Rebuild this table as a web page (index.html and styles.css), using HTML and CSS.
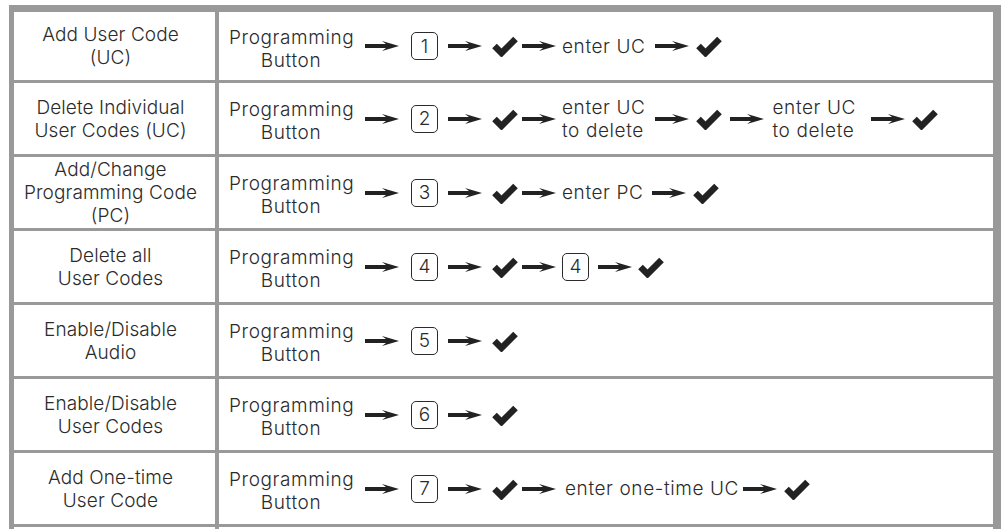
FILE: index.html
```html
<!DOCTYPE html>
<html>
<head>
<meta charset="utf-8">
<link rel="stylesheet" href="styles.css">
</head>
<body>
<svg width="0" height="0" class="defs">
  <defs>
    <symbol id="arr" viewBox="0 0 34 10"><path d="M0 3 H21 L17 0 L34 5 L17 10 L21 7 H0 Z"/></symbol>
    <symbol id="chk" viewBox="0 0 26 22"><path d="M2.5 11 L9.5 18 L23.5 4" fill="none" stroke="currentColor" stroke-width="6.5"/></symbol>
  </defs>
</svg>
<div class="table">
  <div class="row first">
    <div class="name">Add User Code<br>(UC)</div>
    <div class="steps">
      <div class="pb">Programming<br>Button</div>
      <svg class="arrow m12"><use href="#arr"/></svg>
      <div class="box m12">1</div>
      <svg class="arrow m10"><use href="#arr"/></svg>
      <svg class="check m10"><use href="#chk"/></svg>
      <svg class="arrow m4"><use href="#arr"/></svg>
      <div class="txt m6">enter UC</div>
      <svg class="arrow m9"><use href="#arr"/></svg>
      <svg class="check m7"><use href="#chk"/></svg>
    </div>
  </div>
  <div class="row">
    <div class="name">Delete Individual<br>User Codes (UC)</div>
    <div class="steps">
      <div class="pb">Programming<br>Button</div>
      <svg class="arrow m12"><use href="#arr"/></svg>
      <div class="box m12">2</div>
      <svg class="arrow m10"><use href="#arr"/></svg>
      <svg class="check m10"><use href="#chk"/></svg>
      <svg class="arrow m4"><use href="#arr"/></svg>
      <div class="txt m6">enter UC<br>to delete</div>
      <svg class="arrow m9"><use href="#arr"/></svg>
      <svg class="check m7"><use href="#chk"/></svg>
      <svg class="arrow m8"><use href="#arr"/></svg>
      <div class="txt m9">enter UC<br>to delete</div>
      <svg class="arrow m15"><use href="#arr"/></svg>
      <svg class="check m7"><use href="#chk"/></svg>
    </div>
  </div>
  <div class="row">
    <div class="name">Add/Change<br>Programming Code<br>(PC)</div>
    <div class="steps">
      <div class="pb">Programming<br>Button</div>
      <svg class="arrow m12"><use href="#arr"/></svg>
      <div class="box m12">3</div>
      <svg class="arrow m10"><use href="#arr"/></svg>
      <svg class="check m10"><use href="#chk"/></svg>
      <svg class="arrow m4"><use href="#arr"/></svg>
      <div class="txt m6">enter PC</div>
      <svg class="arrow m9"><use href="#arr"/></svg>
      <svg class="check m7"><use href="#chk"/></svg>
    </div>
  </div>
  <div class="row">
    <div class="name">Delete all<br>User Codes</div>
    <div class="steps">
      <div class="pb">Programming<br>Button</div>
      <svg class="arrow m12"><use href="#arr"/></svg>
      <div class="box m12">4</div>
      <svg class="arrow m10"><use href="#arr"/></svg>
      <svg class="check m10"><use href="#chk"/></svg>
      <svg class="arrow m4"><use href="#arr"/></svg>
      <div class="box m6">4</div>
      <svg class="arrow m9"><use href="#arr"/></svg>
      <svg class="check m6"><use href="#chk"/></svg>
    </div>
  </div>
  <div class="row">
    <div class="name">Enable/Disable<br>Audio</div>
    <div class="steps">
      <div class="pb">Programming<br>Button</div>
      <svg class="arrow m12"><use href="#arr"/></svg>
      <div class="box m12">5</div>
      <svg class="arrow m10"><use href="#arr"/></svg>
      <svg class="check m10"><use href="#chk"/></svg>
    </div>
  </div>
  <div class="row">
    <div class="name">Enable/Disable<br>User Codes</div>
    <div class="steps">
      <div class="pb">Programming<br>Button</div>
      <svg class="arrow m12"><use href="#arr"/></svg>
      <div class="box m12">6</div>
      <svg class="arrow m10"><use href="#arr"/></svg>
      <svg class="check m10"><use href="#chk"/></svg>
    </div>
  </div>
  <div class="row">
    <div class="name">Add One-time<br>User Code</div>
    <div class="steps">
      <div class="pb">Programming<br>Button</div>
      <svg class="arrow m12"><use href="#arr"/></svg>
      <div class="box m12">7</div>
      <svg class="arrow m10"><use href="#arr"/></svg>
      <svg class="check m10"><use href="#chk"/></svg>
      <svg class="arrow m4"><use href="#arr"/></svg>
      <div class="txt m9">enter one-time UC</div>
      <svg class="arrow m4"><use href="#arr"/></svg>
      <svg class="check m7"><use href="#chk"/></svg>
    </div>
  </div>
  <div class="row">
    <div class="name"></div>
    <div class="steps"></div>
  </div>
</div>
</body>
</html>
```

FILE: styles.css
```css
html, body {
  margin: 0;
  padding: 0;
  background: #ffffff;
  overflow: hidden;
}
body {
  font-family: Inter, "Liberation Sans", sans-serif;
  font-weight: 300;
  font-size: 19px;
  line-height: 23px;
  color: #2b2b2b;
}
.defs {
  position: absolute;
}
.table {
  margin: 5px 0 0 9px;
  width: 992px;
  box-sizing: border-box;
  border-style: solid;
  border-color: #999999;
  border-width: 7px 8px 0 5px;
  background: #ffffff;
}
.row {
  display: grid;
  grid-template-columns: 205px 1fr;
  height: 71px;
  border-bottom: 3px solid #999999;
}
.row.first {
  height: 68px;
}
.name {
  display: flex;
  align-items: center;
  justify-content: center;
  text-align: center;
  border-right: 4px solid #999999;
  padding-right: 8px;
  letter-spacing: 0.1px;
}
.steps {
  display: flex;
  align-items: center;
  padding-left: 10px;
  letter-spacing: 0.6px;
}
.pb {
  width: 124px;
  text-align: center;
  padding-top: 5px;
  flex: none;
}
.arrow {
  width: 34px;
  height: 10px;
  fill: #222222;
  flex: none;
}
.check {
  width: 26px;
  height: 22px;
  color: #222222;
  flex: none;
}
.box {
  width: 27px;
  height: 28px;
  box-sizing: border-box;
  border: 1.5px solid #2b2b2b;
  border-radius: 5px;
  display: flex;
  align-items: center;
  justify-content: center;
  flex: none;
  letter-spacing: 0;
}
.txt {
  white-space: nowrap;
}
.m4 { margin-left: 4px; }
.m6 { margin-left: 6px; }
.m7 { margin-left: 7px; }
.m8 { margin-left: 8px; }
.m9 { margin-left: 9px; }
.m10 { margin-left: 10px; }
.m11 { margin-left: 11px; }
.m12 { margin-left: 12px; }
.m15 { margin-left: 15px; }
```
